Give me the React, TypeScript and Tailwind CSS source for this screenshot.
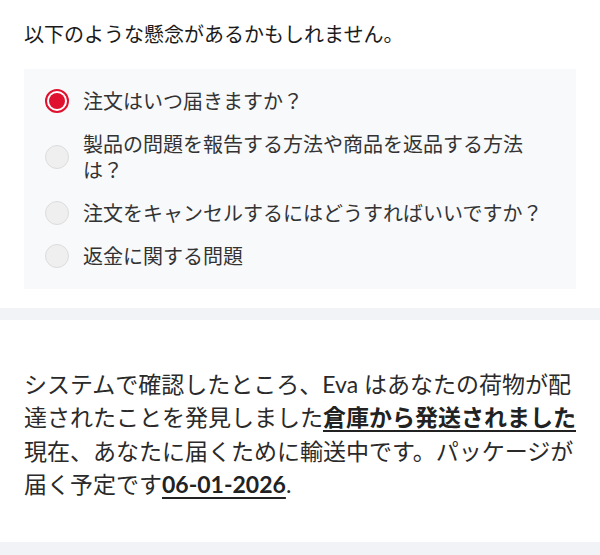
import React from "react";

const options = [
  "注文はいつ届きますか？",
  "製品の問題を報告する方法や商品を返品する方法は？",
  "注文をキャンセルするにはどうすればいいですか？",
  "返金に関する問題",
];

function Radio({ selected }: { selected: boolean }) {
  if (selected) {
    return (
      <span className="flex h-6 w-6 shrink-0 items-center justify-center rounded-full border-2 border-[#e0102f] bg-white">
        <span className="h-4 w-4 rounded-full bg-[#e0102f]" />
      </span>
    );
  }
  return <span className="h-6 w-6 shrink-0 rounded-full border border-[#dcdcdc] bg-[#efefef]" />;
}

export default function App() {
  return (
    <div
      className="w-[600px] h-[555px] overflow-hidden bg-white text-[#222]"
      style={{ fontFamily: "Lato, 'Noto Sans CJK JP', sans-serif" }}
    >
      <section className="px-6 pt-5 pb-[19px]">
        <h2 className="text-[20px] leading-[28px] text-[#1a1a1a]">以下のような懸念があるかもしれません。</h2>
        <div className="mt-[21px] bg-[#f8f9fb] pl-[21px] pr-[30px] pt-[19px] pb-[20px] flex flex-col gap-[17px]">
          {options.map((o, i) => (
            <div key={i} className="flex items-center gap-[14px]">
              <Radio selected={i === 0} />
              <span className="text-[20px] leading-[26px] text-[#333]">{o}</span>
            </div>
          ))}
        </div>
      </section>
      <div className="h-3 bg-[#f2f3f6]" />
      <section className="pl-6 pr-5 pt-[48px] pb-[41px]">
        <p className="text-[23px] leading-[33.3px] text-[#2a2a2a]">
          システムで確認したところ、Eva はあなたの荷物が配達されたことを発見しました
          <span className="font-bold underline underline-offset-4 decoration-2 text-[#222]">倉庫から発送されました</span>
          現在、あなたに届くために輸送中です。パッケージが届く予定です
          <span className="font-bold underline underline-offset-4 decoration-2 text-[#222]">06-01-2026</span>.
        </p>
      </section>
      <div className="h-4 bg-[#f2f3f6]" />
    </div>
  );
}
